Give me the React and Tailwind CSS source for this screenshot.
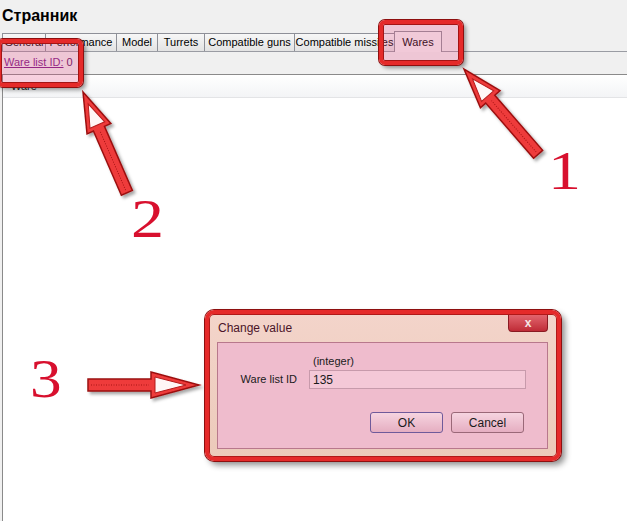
const tabs = [
  { label: "General", w: "w-[44px]" },
  { label: "Performance", w: "w-[72px]" },
  { label: "Model", w: "w-[42px]" },
  { label: "Turrets", w: "w-[48px]" },
  { label: "Compatible guns", w: "w-[91px]" },
  { label: "Compatible missiles", w: "w-[101px]" },
];

function Arrow({ x, y, angle, length, head = 40, half = 13, shaft = 6 }) {
  const L = length;
  const H = head;
  const outer = `${-L},${-shaft} ${-H},${-shaft} ${-H},${-half} 0,0 ${-H},${half} ${-H},${shaft} ${-L},${shaft}`;
  const inner = `${-H + 4},${-half + 5} ${-13},0 ${-H + 4},${half - 5}`;
  return (
    <g filter="url(#arrowShadow)">
      <g transform={`translate(${x} ${y}) rotate(${angle})`}>
        <polygon points={outer} fill="#ee3b3b" stroke="#9c1010" strokeWidth="1.5" />
        <polygon points={inner} fill="#fff6f6" stroke="#b51b1b" strokeWidth="1" />
        <line x1={-L + 3} y1="0" x2={-H - 2} y2="0" stroke="#a81515" strokeWidth="1" strokeDasharray="1 1.5" />
      </g>
    </g>
  );
}

function Highlight({ className }) {
  return (
    <div
      className={`absolute rounded-[6px] border-[4px] border-[#e52a2a] bg-[rgba(232,70,130,0.25)] ring-1 ring-[#8e0f0f] inset-shadow-[0_0_0_1px_#a31515] shadow-[3px_3px_4px_rgba(0,0,0,0.4)] ${className}`}
    />
  );
}

function ChangeValueDialog() {
  return (
    <div className="absolute left-[205px] top-[310px] w-[356px] h-[151px] rounded-[9px] border-[4px] border-[#e52a2a] ring-1 ring-[#8e0f0f] inset-shadow-[0_0_0_1px_#b01818] shadow-[4px_4px_6px_rgba(0,0,0,0.45)] bg-linear-to-b from-[#f3d4ca] to-[#eccaba] flex flex-col pl-[8px] pr-[9px] pb-[8px] text-[#1a1a1a]">
      <div className="h-[28px] flex justify-between items-start">
        <span className="pl-px pt-[7px] text-[12px] leading-[14px] text-[#4a1428]">Change value</span>
        <div className="mt-px w-[40px] h-[17px] rounded-b-[4px] border border-t-0 border-[#8a1a22] bg-linear-to-b from-[#e2646e] to-[#bf2a37] flex items-center justify-center text-[12px] font-bold leading-none text-[#f6e4e4]">
          x
        </div>
      </div>
      <div className="flex-1 border border-[#b8788c] bg-[#efbccd] flex flex-col text-[11px]">
        <div className="mt-[11px] h-[14px] pl-[95px] leading-[14px]">(integer)</div>
        <div className="mt-[2px] flex items-center">
          <span className="w-[91px] pr-[12px] text-right">Ware list ID</span>
          <div className="w-[217px] h-[19px] border border-[#c79aab] bg-[#f4c8d7] pl-[3px] flex items-center text-[12px]">
            135
          </div>
        </div>
        <div className="mt-[23px] flex justify-end gap-[8px] pr-[23px] text-[12px]">
          <div className="w-[73px] h-[21px] rounded-[3px] border border-[#6f5a9a] bg-linear-to-b from-[#f6d4e0] to-[#e5aec1] flex items-center justify-center">
            OK
          </div>
          <div className="w-[73px] h-[21px] rounded-[3px] border border-[#9a6878] bg-linear-to-b from-[#f6d4e0] to-[#e5aec1] flex items-center justify-center">
            Cancel
          </div>
        </div>
      </div>
    </div>
  );
}

export default function App() {
  return (
    <div className="relative w-[627px] h-[521px] overflow-hidden bg-[#f0f0f0] font-['Liberation_Sans',Arial,sans-serif] text-black flex flex-col">
      <div className="h-[31px] shrink-0 pl-[2px] pt-[7px] text-[16px] leading-[18px] font-bold">Странник</div>

      <div className="h-[21px] shrink-0 flex items-end pl-[3px] border-b border-[#9a9ca3] text-[11px]">
        {tabs.map(({ label, w }) => (
          <div
            key={label}
            className={`${w} h-[18px] -ml-px border border-b-0 border-[#8e9098] bg-linear-to-b from-[#f7f7f7] to-[#e3e3e3] flex items-center justify-center whitespace-nowrap overflow-hidden`}
          >
            {label}
          </div>
        ))}
        <div className="w-[48px] h-[21px] -ml-px -mb-px border border-b-0 border-[#8e9098] bg-[#f4f4f4] flex items-center justify-center">
          Wares
        </div>
      </div>

      <div className="h-[22px] shrink-0 pl-[4px] pt-[4px] text-[11px] leading-[13px]">
        <span className="text-[#7a1a86] underline">Ware list ID:</span>
        <span className="text-[#5a1060]"> 0</span>
      </div>

      <div className="flex-1 ml-[2px] border-l border-t border-[#8a8a8a] bg-white flex flex-col">
        <div className="h-[23px] shrink-0 pl-[8px] flex items-center border-b border-[#e3e4e6] bg-linear-to-b from-white to-[#f3f4f6] text-[11px] text-[#222]">
          Ware
        </div>
      </div>

      <Highlight className="left-[379px] top-[20px] w-[84px] h-[45px]" />
      <Highlight className="left-[-3px] top-[39px] w-[86px] h-[48px]" />

      <svg className="absolute left-0 top-0 pointer-events-none" width="627" height="521">
        <defs>
          <filter id="arrowShadow" x="-30%" y="-30%" width="170%" height="170%">
            <feDropShadow dx="2.5" dy="2.5" stdDeviation="1.5" floodColor="#000" floodOpacity="0.35" />
          </filter>
        </defs>
        <Arrow x={464} y={69} angle={-131} length={113} head={40} half={13} />
        <Arrow x={83} y={92} angle={-113.5} length={110} head={40} half={13} />
        <Arrow x={199} y={385} angle={0} length={111} head={48} half={13} />
      </svg>

      <div className="absolute left-[548px] top-[143px] origin-left scale-x-[1.2] font-['Liberation_Serif',serif] text-[55px] leading-none text-[#d8102e]">1</div>
      <div className="absolute left-[131px] top-[191px] origin-left scale-x-[1.2] font-['Liberation_Serif',serif] text-[55px] leading-none text-[#d8102e]">2</div>
      <div className="absolute left-[30px] top-[351px] origin-left scale-x-[1.15] font-['Liberation_Serif',serif] text-[55px] leading-none text-[#d8102e]">3</div>

      <ChangeValueDialog />
    </div>
  );
}
